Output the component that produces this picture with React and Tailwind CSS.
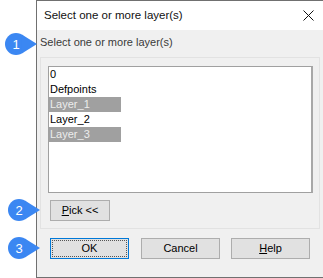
function Callout({ n, top, left }) {
  return (
    <div className="absolute" style={{ top, left }}>
      <svg width="34" height="24" viewBox="0 0 34 24">
        <circle cx="12" cy="12" r="11" fill="#3b87f2" />
        <polygon points="17.8,2.6 33,12 17.8,21.4" fill="#3b87f2" />
        <text x="12" y="16.5" textAnchor="middle" fill="#fff" fontSize="13" fontFamily="Liberation Sans, sans-serif">
          {n}
        </text>
      </svg>
    </div>
  )
}

const layers = [
  { name: '0', sel: false },
  { name: 'Defpoints', sel: false },
  { name: 'Layer_1', sel: true },
  { name: 'Layer_2', sel: false },
  { name: 'Layer_3', sel: true },
]

export default function App() {
  return (
    <div className="relative w-[323px] h-[278px] bg-white overflow-hidden font-['Liberation_Sans',sans-serif] text-[11px] text-black">
      <div className="ml-[36px] w-[300px] h-[278px] border-l border-t border-b border-[#707070] flex flex-col">
        <div className="h-[29px] bg-white flex items-center pl-[7px] pr-[10px]">
          <span className="text-[11.5px] text-[#111] flex-1">Select one or more layer(s)</span>
          <svg width="11" height="11" viewBox="0 0 11 11" className="mr-[12px]">
            <path d="M0.5 0.5 L10.5 10.5 M10.5 0.5 L0.5 10.5" stroke="#111" strokeWidth="1" />
          </svg>
        </div>
        <div className="flex-1 bg-[#f0f0f0] pl-[3px] pt-[6px]">
          <div className="text-[#3a3a3a] leading-[13px]">Select one or more layer(s)</div>
          <div className="mt-[8px] w-[280px] h-[172px] border border-[#e2e2e2] pt-[8px] pl-[7px]">
            <div className="w-[265px] h-[127px] bg-white border border-[#a0a0a0] border-r-2 border-r-[#a8a8a8]">
              {layers.map((l) => (
                <div key={l.name} className="h-[15px] leading-[15px]">
                  <span
                    className={
                      l.sel
                        ? 'inline-block w-[72px] pl-[1px] bg-[#a0a0a0] text-[#ececec]'
                        : 'inline-block pl-[1px]'
                    }
                  >
                    {l.name}
                  </span>
                </div>
              ))}
            </div>
            <button className="mt-[7px] ml-[2px] w-[60px] h-[21px] bg-[#e1e1e1] border border-[#adadad] flex items-center justify-center">
              <span>
                <span className="underline">P</span>ick &lt;&lt;
              </span>
            </button>
          </div>
          <div className="mt-[9px] ml-[10px] flex">
            <button className="w-[79px] h-[21px] bg-[#e1e1e1] border border-[#0078d7] p-[1px]">
              <div className="h-full border border-dotted border-[#555] flex items-center justify-center">OK</div>
            </button>
            <button className="ml-[12px] w-[79px] h-[21px] bg-[#e1e1e1] border border-[#adadad] flex items-center justify-center">
              Cancel
            </button>
            <button className="ml-[11px] w-[79px] h-[21px] bg-[#e1e1e1] border border-[#adadad] flex items-center justify-center">
              <span>
                <span className="underline">H</span>elp
              </span>
            </button>
          </div>
        </div>
      </div>
      <Callout n="1" top={32} left={4} />
      <Callout n="2" top={198} left={7} />
      <Callout n="3" top={236} left={7} />
    </div>
  )
}
